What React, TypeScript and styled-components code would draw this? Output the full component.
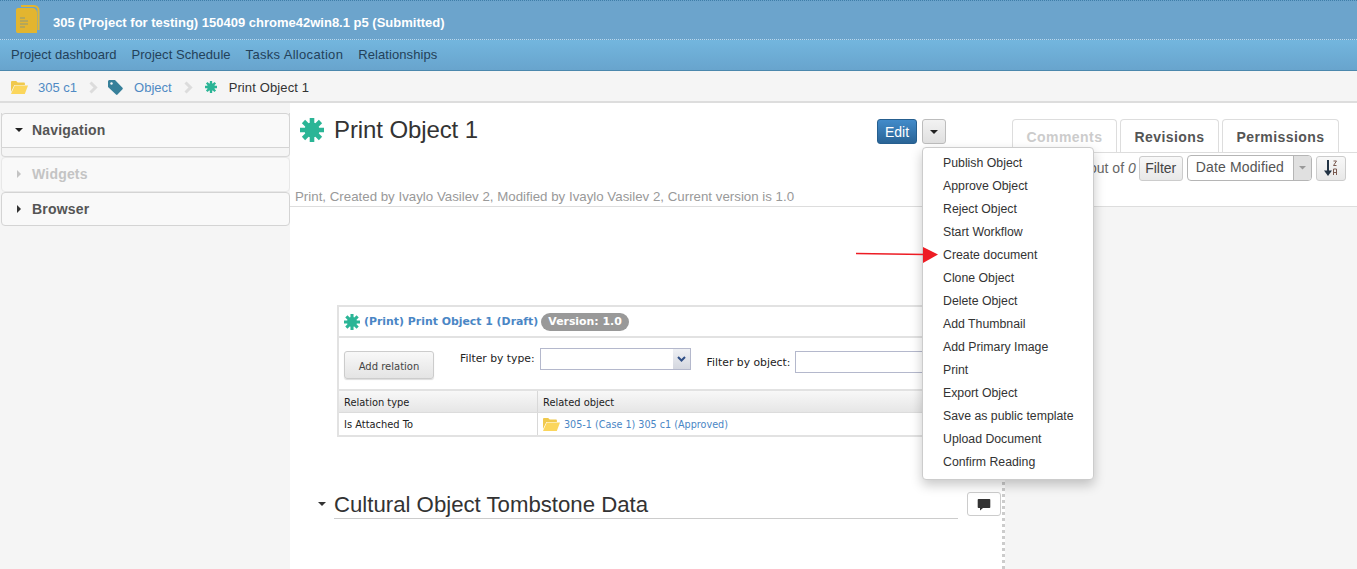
import React from 'react';
import styled, { createGlobalStyle } from 'styled-components';

const Global = createGlobalStyle`
  html, body { margin: 0; padding: 0; background: #fff; overflow: hidden; }
  body { font-family: "Liberation Sans", Arial, sans-serif; color: #333; }
  * { box-sizing: border-box; }
`;

const Page = styled.div`
  position: relative;
  width: 1357px;
  height: 569px;
  overflow: hidden;
`;

const TitleBar = styled.header`
  height: 40px;
  background: #6ca4cc;
  border-top: 1px dotted #3f7ea8;
  border-bottom: 1px dotted #b9d9ee;
  display: flex;
  align-items: center;
  padding: 0 0 0 15px;
  gap: 12px;
`;

const TitleText = styled.h1`
  margin: 0;
  font-size: 13px;
  font-weight: 700;
  color: #fff;
  position: relative;
  top: 2px;
`;

const NavBar = styled.nav`
  height: 31px;
  background: linear-gradient(#73b6de, #68a4cd);
  border-bottom: 1px solid #4b88ad;
  display: flex;
  align-items: center;
  padding: 0 0 2px 11px;
  gap: 15px;
`;

const NavItem = styled.a<{ $track?: number }>`
  font-size: 13px;
  letter-spacing: ${p => p.$track ?? 0}px;
  color: #23415a;
`;

const Crumbs = styled.div`
  height: 32px;
  background: #f5f5f5;
  border-bottom: 2px solid #ddd;
  display: flex;
  align-items: center;
  padding: 2px 0 0 11px;
  font-size: 13px;
`;

const CrumbLink = styled.a<{ $ml: number }>`
  color: #4f8ac4;
  margin-left: ${p => p.$ml}px;
`;

const CrumbCurrent = styled.span`
  color: #333;
  margin-left: 12px;
  letter-spacing: 0.12px;
`;

const CrumbSep = styled.svg<{ $ml: number; $mr: number }>`
  margin-left: ${p => p.$ml}px;
  margin-right: ${p => p.$mr}px;
`;

const Body = styled.div`
  display: flex;
  height: 466px;
`;

const Sidebar = styled.aside`
  width: 290px;
  flex: none;
  background: #f5f5f5;
  padding-top: 10px;
`;

const Accordion = styled.div<{ $h: number; $muted?: boolean }>`
  height: ${p => p.$h}px;
  margin: 0 0 0 1px;
  background: #f9f9f9;
  border: 1px solid ${p => (p.$muted ? '#e8e8e8' : '#d4d4d4')};
  border-radius: 4px;
  display: flex;
  align-items: center;
  padding: 0 0 1px 13px;
  gap: 9px;
  font-size: 14px;
  font-weight: 700;
  letter-spacing: 0.2px;
  color: ${p => (p.$muted ? '#c4c4c4' : '#555')};
`;

const NavAccordion = styled.div`
  margin-left: 1px;
  height: 44px;
  border: 1px solid #d8d8d8;
  border-top: 0;
  border-radius: 0 0 4px 4px;
`;

const NavHead = styled(Accordion)`
  margin: 0 -1px;
  border-radius: 4px 4px 0 0;
`;

const Main = styled.main`
  flex: 1;
  display: flex;
  flex-direction: column;
  min-width: 0;
`;

const ObjectHead = styled.div`
  height: 104px;
  border-bottom: 1px solid #ddd;
  display: grid;
  grid-template-columns: 722px 1fr;
`;

const HeadLeft = styled.div`
  padding: 0 0 0 5px;
  display: flex;
  flex-direction: column;
`;

const TitleRow = styled.div`
  height: 81px;
  display: flex;
  align-items: flex-start;
  padding: 15px 0 0 5px;
`;

const ObjectTitle = styled.h2`
  margin: -1px 0 0 10px;
  font-size: 24px;
  line-height: 26px;
  font-weight: 400;
  letter-spacing: -0.1px;
  color: #333;
`;

const Actions = styled.div`
  margin-left: auto;
  margin-right: 66px;
  padding-top: 1px;
  display: flex;
  gap: 5px;
`;

const EditButton = styled.button`
  width: 40px;
  height: 25px;
  padding: 0;
  border: 1px solid #265f8f;
  border-radius: 3px;
  background: linear-gradient(#428bca, #2a6496);
  color: #fff;
  font: 14px "Liberation Sans", Arial, sans-serif;
`;

const CaretButton = styled.button`
  width: 24px;
  height: 25px;
  padding: 0;
  border: 1px solid #bdbdbd;
  border-radius: 3px;
  background: linear-gradient(#f2f2f2, #e0e0e0);
  display: flex;
  align-items: center;
  justify-content: center;
`;

const Meta = styled.div`
  font-size: 13.3px;
  color: #999;
  padding-top: 5px;
`;

const HeadRight = styled.div`
  display: flex;
  flex-direction: column;
`;

const Tabs = styled.div`
  height: 35px;
  margin-top: 15px;
  display: flex;
  gap: 3px;
  border-bottom: 1px solid #ddd;
  width: 345px;
`;

const Tab = styled.div<{ $w: number; $off?: boolean }>`
  width: ${p => p.$w}px;
  height: 34px;
  margin-top: 1px;
  border: 1px solid #ddd;
  border-bottom: 0;
  border-radius: 4px 4px 0 0;
  display: flex;
  align-items: center;
  justify-content: center;
  padding-top: 1px;
  font-size: 14px;
  font-weight: 700;
  letter-spacing: 0.45px;
  color: ${p => (p.$off ? '#ccc' : '#555')};
`;

const ToolRow = styled.div`
  display: flex;
  align-items: center;
  height: 26px;
  margin-top: 2px;
  font-size: 14px;
  color: #666;
  padding-left: 77px;
`;

const OutOf = styled.span`
  margin-right: 3px;
  white-space: nowrap;
  em { font-style: italic; }
`;

const SmallButton = styled.button<{ $w: number; $ml?: number }>`
  width: ${p => p.$w}px;
  height: 25px;
  margin-left: ${p => p.$ml ?? 0}px;
  padding: 0;
  border: 1px solid #ccc;
  border-radius: 3px;
  background: linear-gradient(#f8f8f8, #e8e8e8);
  color: #444;
  font: 14px "Liberation Sans", Arial, sans-serif;
  display: flex;
  align-items: center;
  justify-content: center;
`;

const SortSelect = styled.div`
  margin-left: 4px;
  width: 125px;
  height: 26px;
  border: 1px solid #b5b5b5;
  border-radius: 4px;
  display: flex;
  overflow: hidden;
  color: #555;
  background: #fff;
`;

const SortLabel = styled.div`
  flex: 1;
  padding: 3px 0 0 8px;
  letter-spacing: 0.15px;
`;

const SortArrow = styled.div`
  width: 18px;
  background: #e0e0e0;
  border-left: 1px solid #b5b5b5;
  display: flex;
  align-items: center;
  justify-content: center;
`;

const Content = styled.div`
  flex: 1;
  display: flex;
  min-height: 0;
`;

const Sheet = styled.div`
  width: 715px;
  flex: none;
  border-right: 3px dotted #ccc;
  padding: 98px 0 0 47px;
`;

const RightPane = styled.div`
  flex: 1;
  background: #f5f5f5;
`;

const RelPanel = styled.section`
  width: 620px;
  border-top: 2px solid #e2e2e2;
  border-left: 2px solid #e2e2e2;
  font-family: "DejaVu Sans", Verdana, sans-serif;
`;

const RelHead = styled.div`
  height: 31px;
  display: flex;
  align-items: center;
  padding-left: 5px;
  border-bottom: 2px solid #e2e2e2;
  gap: 3px;
`;

const RelTitle = styled.span`
  font-size: 10.9px;
  font-weight: 700;
  color: #4a86c5;
  margin-left: 1px;
`;

const VersionBadge = styled.span`
  height: 18px;
  line-height: 18px;
  padding: 0 7px;
  border-radius: 9px;
  background: #999;
  color: #fff;
  font-size: 10.9px;
  font-weight: 700;
`;

const FilterRow = styled.div`
  height: 51px;
  display: flex;
  align-items: flex-start;
  padding: 13px 0 0 5px;
  font-size: 10.8px;
  color: #222;
`;

const AddButton = styled.button`
  width: 90px;
  height: 28px;
  padding: 2px 0 0;
  border: 1px solid #ccc;
  border-radius: 3px;
  background: linear-gradient(#f8f8f8, #e4e4e4);
  font: 10px "DejaVu Sans", Verdana, sans-serif;
  color: #444;
  box-shadow: 0 1px 1px #ddd;
`;

const FilterLabel = styled.label<{ $ml: number; $top: number }>`
  margin-left: ${p => p.$ml}px;
  margin-top: ${p => p.$top}px;
  white-space: nowrap;
`;

const TypeBox = styled.div`
  width: 151px;
  height: 22px;
  margin-left: 5px;
  margin-top: -3px;
  border: 1px solid #b4b8cc;
  display: flex;
  justify-content: flex-end;
`;

const TypeArrow = styled.div`
  width: 17px;
  background: linear-gradient(#eef0f4, #d4d7df);
  display: flex;
  align-items: center;
  justify-content: center;
`;

const ObjectBox = styled.div`
  width: 140px;
  height: 22px;
  margin-left: 5px;
  border: 1px solid #b4b8cc;
`;

const RelRow = styled.div<{ $head?: boolean }>`
  display: grid;
  grid-template-columns: 198px 1fr;
  height: 24px;
  font-size: 9.9px;
  color: #222;
  border-top: ${p => (p.$head ? '2px solid #e2e2e2' : '0')};
  border-bottom: ${p => (p.$head ? '1px solid #dcdcdc' : '2px solid #e2e2e2')};
  background: ${p => (p.$head ? 'linear-gradient(#f8f8f8, #e6e6e6)' : '#fff')};
`;

const RelCell = styled.div`
  display: flex;
  align-items: center;
  padding: 1px 0 0 5px;
  gap: 4px;
  & + & { border-left: 1px solid #d8d8d8; }
`;

const RelLink = styled.a`
  color: #4a86c5;
  font-size: 9.65px;
`;

const SectionRow = styled.div`
  display: flex;
  align-items: flex-start;
  margin: 52px 0 0 -19px;
`;

const SectionCaret = styled.svg`
  margin: 13px 8px 0 0;
  flex: none;
`;

const SectionTitle = styled.h3`
  width: 624px;
  margin: 0;
  height: 30px;
  font-size: 22.2px;
  line-height: 31px;
  font-weight: 400;
  color: #333;
  border-bottom: 1px solid #ccc;
`;

const CommentButton = styled.button`
  width: 34px;
  height: 24px;
  margin: 3px 0 0 9px;
  padding: 0;
  border: 1px solid #ccc;
  border-radius: 3px;
  background: #fff;
  display: flex;
  align-items: center;
  justify-content: center;
`;

const Menu = styled.ul`
  position: absolute;
  left: 922px;
  top: 147px;
  width: 172px;
  height: 333px;
  margin: 0;
  padding: 4px 0;
  list-style: none;
  background: #fff;
  border: 1px solid #ccc;
  border-radius: 4px;
  box-shadow: 0 5px 12px rgba(0, 0, 0, 0.22);
  font-size: 12.3px;
  color: #333;
`;

const MenuItem = styled.li`
  height: 23px;
  line-height: 23px;
  padding-left: 20px;
  white-space: nowrap;
`;

const RedArrow = styled.svg`
  position: absolute;
  left: 855px;
  top: 245px;
`;

const Star = ({ size }: { size: number }) => (
  <svg width={size} height={size} viewBox="0 0 24 24" style={{ flex: 'none' }}>
    <circle cx="12" cy="12" r="7.500" fill="#2bb596" />
    <path d="M12 0v24M0 12h24M3.500 3.500l17 17M20.500 3.500l-17 17" stroke="#2bb596" strokeWidth="4.600" />
  </svg>
);

const Folder = () => (
  <svg width="17" height="13" viewBox="0 0 17 13" style={{ flex: 'none' }}>
    <path d="M0 1.200C0 .5.5 0 1.200 0h4l1.500 1.600h6.200c.6 0 1 .4 1 1V4H3.400L0 11z" fill="#f0c94d" />
    <path d="M3.700 4.600H17l-3.200 8.400H0z" fill="#fbd65c" />
  </svg>
);

const Chevron = ({ ml, mr }: { ml: number; mr: number }) => (
  <CrumbSep $ml={ml} $mr={mr} width="9" height="13" viewBox="0 0 9 13">
    <path d="M1.500 1.500 6.500 6.500 1.500 11.500" fill="none" stroke="#dcdcdc" strokeWidth="3" />
  </CrumbSep>
);

const Down = ({ color = '#222', w = 8 }: { color?: string; w?: number }) => (
  <svg width={w} height={w / 2} viewBox="0 0 8 4" style={{ flex: 'none' }}>
    <path d="M0 0h8L4 4z" fill={color} />
  </svg>
);

const Right = ({ color }: { color: string }) => (
  <svg width="4" height="8" viewBox="0 0 4 8" style={{ flex: 'none', margin: '0 2px' }}>
    <path d="M0 0v8l4-4z" fill={color} />
  </svg>
);

const menu = [
  'Publish Object', 'Approve Object', 'Reject Object', 'Start Workflow', 'Create document',
  'Clone Object', 'Delete Object', 'Add Thumbnail', 'Add Primary Image', 'Print',
  'Export Object', 'Save as public template', 'Upload Document', 'Confirm Reading',
];

export default function App() {
  return (
    <Page>
      <Global />
      <TitleBar>
        <svg width="26" height="30" viewBox="0 0 26 30" style={{ flex: 'none' }}>
          <path d="M6 1h13c2.500 0 4.500 2 4.500 4.500V25" fill="none" stroke="#e3b52f" strokeWidth="2" />
          <path d="M3 3h14c3 0 5 2 5 5v20H3c-1 0-2-.5-2-2V5c0-1 1-2 2-2z" fill="#e3b52f" />
          <path d="M5 13h5M5 16h8M5 19h8M5 22h5" stroke="#8a9a80" strokeWidth="1.200" />
        </svg>
        <TitleText>305 (Project for testing) 150409 chrome42win8.1 p5 (Submitted)</TitleText>
      </TitleBar>
      <NavBar>
        <NavItem>Project dashboard</NavItem>
        <NavItem $track={0.05}>Project Schedule</NavItem>
        <NavItem $track={0.32}>Tasks Allocation</NavItem>
        <NavItem $track={0.08}>Relationships</NavItem>
      </NavBar>
      <Crumbs>
        <Folder />
        <CrumbLink $ml={10}>305 c1</CrumbLink>
        <Chevron ml={12} mr={10} />
        <svg width="15" height="15" viewBox="0 0 15 15" style={{ flex: 'none' }}>
          <path d="M0 1.500C0 .7.7 0 1.500 0H7l7.500 7.800c.5.5.5 1 0 1.500L9.500 14.500c-.5.5-1 .5-1.500 0L0 7z" fill="#37809a" />
          <circle cx="3.500" cy="3.500" r="1.200" fill="#f5f5f5" />
        </svg>
        <CrumbLink $ml={11}>Object</CrumbLink>
        <Chevron ml={12} mr={12} />
        <Star size={12} />
        <CrumbCurrent>Print Object 1</CrumbCurrent>
      </Crumbs>
      <Body>
        <Sidebar>
          <NavAccordion>
            <NavHead $h={35}>
              <Down />
              Navigation
            </NavHead>
          </NavAccordion>
          <Accordion $h={35} $muted>
            <Right color="#c4c4c4" />
            Widgets
          </Accordion>
          <Accordion $h={34}>
            <Right color="#333" />
            Browser
          </Accordion>
        </Sidebar>
        <Main>
          <ObjectHead>
            <HeadLeft>
              <TitleRow>
                <Star size={24} />
                <ObjectTitle>Print Object 1</ObjectTitle>
                <Actions>
                  <EditButton>Edit</EditButton>
                  <CaretButton><Down /></CaretButton>
                </Actions>
              </TitleRow>
              <Meta>Print, Created by Ivaylo Vasilev 2, Modified by Ivaylo Vasilev 2, Current version is 1.0</Meta>
            </HeadLeft>
            <HeadRight>
              <Tabs>
                <Tab $w={105} $off>Comments</Tab>
                <Tab $w={99}>Revisions</Tab>
                <Tab $w={117}>Permissions</Tab>
              </Tabs>
              <ToolRow>
                <OutOf>out of <em>0</em></OutOf>
                <SmallButton $w={44}>Filter</SmallButton>
                <SortSelect>
                  <SortLabel>Date Modified</SortLabel>
                  <SortArrow><Down color="#999" w={7} /></SortArrow>
                </SortSelect>
                <SmallButton $w={30} $ml={4}>
                  <svg width="13" height="16" viewBox="0 0 13 16">
                    <path d="M4 0v12" stroke="#223344" strokeWidth="2" />
                    <path d="M0 10.500h8L4 16z" fill="#223344" />
                    <path d="M9.500 1h3l-3 4.500h3" fill="none" stroke="#7a5a50" strokeWidth="1" />
                    <path d="M9.500 15V9h3v6M9.500 12.500h3" fill="none" stroke="#7a5a50" strokeWidth="1" />
                  </svg>
                </SmallButton>
              </ToolRow>
            </HeadRight>
          </ObjectHead>
          <Content>
            <Sheet>
              <RelPanel>
                <RelHead>
                  <Star size={16} />
                  <RelTitle>(Print) Print Object 1 (Draft)</RelTitle>
                  <VersionBadge>Version: 1.0</VersionBadge>
                </RelHead>
                <FilterRow>
                  <AddButton>Add relation</AddButton>
                  <FilterLabel $ml={26} $top={1}>Filter by type:</FilterLabel>
                  <TypeBox>
                    <TypeArrow>
                      <svg width="9" height="6" viewBox="0 0 9 6">
                        <path d="M1 1 4.500 4.500 8 1" fill="none" stroke="#2f4f86" strokeWidth="2" />
                      </svg>
                    </TypeArrow>
                  </TypeBox>
                  <FilterLabel $ml={16} $top={5}>Filter by object:</FilterLabel>
                  <ObjectBox />
                </FilterRow>
                <RelRow $head>
                  <RelCell>Relation type</RelCell>
                  <RelCell>Related object</RelCell>
                </RelRow>
                <RelRow>
                  <RelCell>Is Attached To</RelCell>
                  <RelCell>
                    <Folder />
                    <RelLink>305-1 (Case 1) 305 c1 (Approved)</RelLink>
                  </RelCell>
                </RelRow>
              </RelPanel>
              <SectionRow>
                <SectionCaret width="8" height="4" viewBox="0 0 8 4"><path d="M0 0h8L4 4z" fill="#333" /></SectionCaret>
                <SectionTitle>Cultural Object Tombstone Data</SectionTitle>
                <CommentButton>
                  <svg width="14" height="13" viewBox="0 0 14 13">
                    <path d="M1.500 1h11c.5 0 .8.3.8.8v7.400c0 .5-.3.8-.8.8H6L3 12.500V10H1.500C1 10 .7 9.700.7 9.200V1.800C.7 1.300 1 1 1.500 1z" fill="#333" />
                  </svg>
                </CommentButton>
              </SectionRow>
            </Sheet>
            <RightPane />
          </Content>
        </Main>
      </Body>
      <Menu>
        {menu.map(m => <MenuItem key={m}>{m}</MenuItem>)}
      </Menu>
      <RedArrow width="84" height="20" viewBox="0 0 84 20">
        <path d="M1 8.500 70 9.500" stroke="#ed1c24" strokeWidth="1.600" fill="none" />
        <path d="M68 2 83 9.500 68 18z" fill="#ed1c24" />
      </RedArrow>
    </Page>
  );
}
